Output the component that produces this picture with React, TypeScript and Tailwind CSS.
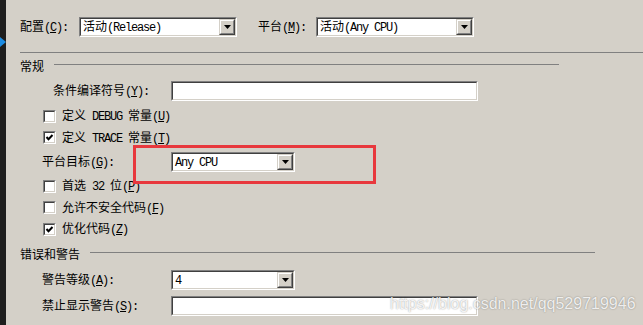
import React from 'react';

const latin = /^[\u0020-\u007e]+$/;
const monoCls = "font-['Liberation_Mono',monospace] text-[12px] tracking-[-1.2px] whitespace-pre";

// render mixed CJK / ASCII text, ASCII in a narrow mono face like SimSun's half-width glyphs
function Mix({ s }: { s: string }) {
  const parts = s.split(/([\u0020-\u007e]+)/).filter(Boolean);
  return (
    <>
      {parts.map((p, i) =>
        latin.test(p) ? (
          <span key={i} className={monoCls}>
            {p}
          </span>
        ) : (
          <span key={i}>{p}</span>
        )
      )}
    </>
  );
}

function Lbl({ t, k, colon = true }: { t: string; k: string; colon?: boolean }) {
  return (
    <span className="whitespace-nowrap">
      <Mix s={t} />
      <span className={monoCls}>
        (<span className="underline">{k}</span>){colon ? ':' : ''}
      </span>
    </span>
  );
}

function Sunken({ className, children }: { className: string; children?: React.ReactNode }) {
  return (
    <div className={`border border-t-[#808080] border-l-[#808080] border-b-white border-r-white ${className}`}>
      <div className="h-full w-full border border-t-[#404040] border-l-[#404040] border-b-[#d4d0c8] border-r-[#d4d0c8] bg-white flex items-center">
        {children}
      </div>
    </div>
  );
}

function Combo({ w, text }: { w: string; text: string }) {
  return (
    <Sunken className={`${w} h-[20px]`}>
      <span className="flex-1 pl-[2px] whitespace-nowrap">
        <Mix s={text} />
      </span>
      <div className="w-[16px] h-full border border-t-[#d4d0c8] border-l-[#d4d0c8] border-b-[#404040] border-r-[#404040]">
        <div className="h-full w-full bg-[#d4d0c8] border border-t-white border-l-white border-b-[#808080] border-r-[#808080] flex items-center justify-center">
          <svg width="7" height="4" viewBox="0 0 7 4">
            <polygon points="0,0 7,0 3.5,4" fill="#000" />
          </svg>
        </div>
      </div>
    </Sunken>
  );
}

function Check({ on, h, label }: { on?: boolean; h: string; label: React.ReactNode }) {
  return (
    <div className={`${h} flex items-center ml-[23px]`}>
      <Sunken className="w-[13px] h-[13px] justify-center">
        {on && (
          <svg width="9" height="9" viewBox="0 0 9 9" className="mx-auto">
            <polyline points="1.5,4 3.5,6.2 7.5,2" fill="none" stroke="#000" strokeWidth="2" />
          </svg>
        )}
      </Sunken>
      <span className="ml-[6px]">{label}</span>
    </div>
  );
}

function Section({ title, mt }: { title: string; mt: string }) {
  return (
    <div className={`${mt} h-[14px] flex items-start`}>
      <span className="leading-[14px]">{title}</span>
      <div className="ml-[10px] mt-[5px] w-[505px] h-px bg-[#808080]" />
    </div>
  );
}

export default function App() {
  return (
    <div className="relative w-[643px] h-[325px] overflow-hidden bg-[#d4d0c8] flex font-['Noto_Sans_CJK_SC',sans-serif] text-[12px] leading-[14px] text-black">
      {/* dark editor gutter */}
      <div className="w-[6px] bg-[#1e1e1e] pt-[37px]">
        <svg width="6" height="10" viewBox="0 0 6 10">
          <polygon points="0,0 6,5 0,10" fill="#1c8ce3" />
        </svg>
      </div>

      <div className="flex-1 pl-[14px] flex flex-col">
        {/* configuration / platform */}
        <div className="mt-[17px] h-[20px] flex items-center">
          <span className="w-[59px]"><Lbl t="配置" k="C" /></span>
          <Combo w="w-[158px]" text="活动(Release)" />
          <span className="ml-[21px] w-[58px]"><Lbl t="平台" k="M" /></span>
          <Combo w="w-[158px]" text="活动(Any CPU)" />
        </div>

        <div className="mt-[15px] h-px bg-[#808080]" />

        <Section title="常规" mt="mt-[6px]" />

        <div className="mt-[8px] h-[20px] flex items-center">
          <span className="ml-[33px] w-[118px]"><Lbl t="条件编译符号" k="Y" /></span>
          <Sunken className="w-[307px] h-[20px]" />
        </div>

        <div className="mt-[4px]" />
        <Check h="h-[22px]" label={<Lbl t="定义 DEBUG 常量" k="U" colon={false} />} />
        <Check on h="h-[21px]" label={<Lbl t="定义 TRACE 常量" k="T" colon={false} />} />

        <div className="h-[27px] flex items-center">
          <span className="ml-[22px] w-[129px]"><Lbl t="平台目标" k="G" /></span>
          <Combo w="w-[124px]" text="Any CPU" />
        </div>

        <Check h="h-[22px]" label={<Lbl t="首选 32 位" k="P" colon={false} />} />
        <Check h="h-[21px]" label={<Lbl t="允许不安全代码" k="F" colon={false} />} />
        <Check on h="h-[22px]" label={<Lbl t="优化代码" k="Z" colon={false} />} />

        <Section title="错误和警告" mt="mt-[7px]" />

        <div className="mt-[9px] h-[20px] flex items-center">
          <span className="ml-[22px] w-[129px]"><Lbl t="警告等级" k="A" /></span>
          <Combo w="w-[124px]" text="4" />
        </div>

        <div className="mt-[6px] h-[20px] flex items-center">
          <span className="ml-[22px] w-[129px]"><Lbl t="禁止显示警告" k="S" /></span>
          <Sunken className="w-[307px] h-[20px]" />
        </div>
      </div>

      {/* annotation box */}
      <div className="absolute left-[133px] top-[145px] w-[243px] h-[39px] border-[3px] border-[#e8383d]" />

      {/* watermark */}
      <div className="absolute left-[390px] top-[294px] font-['Liberation_Sans',sans-serif] text-[16px] leading-[20px] text-white/85 [text-shadow:0_0_1.5px_rgba(0,0,0,0.45)]">
        https://blog.csdn.net/qq529719946
      </div>
    </div>
  );
}
